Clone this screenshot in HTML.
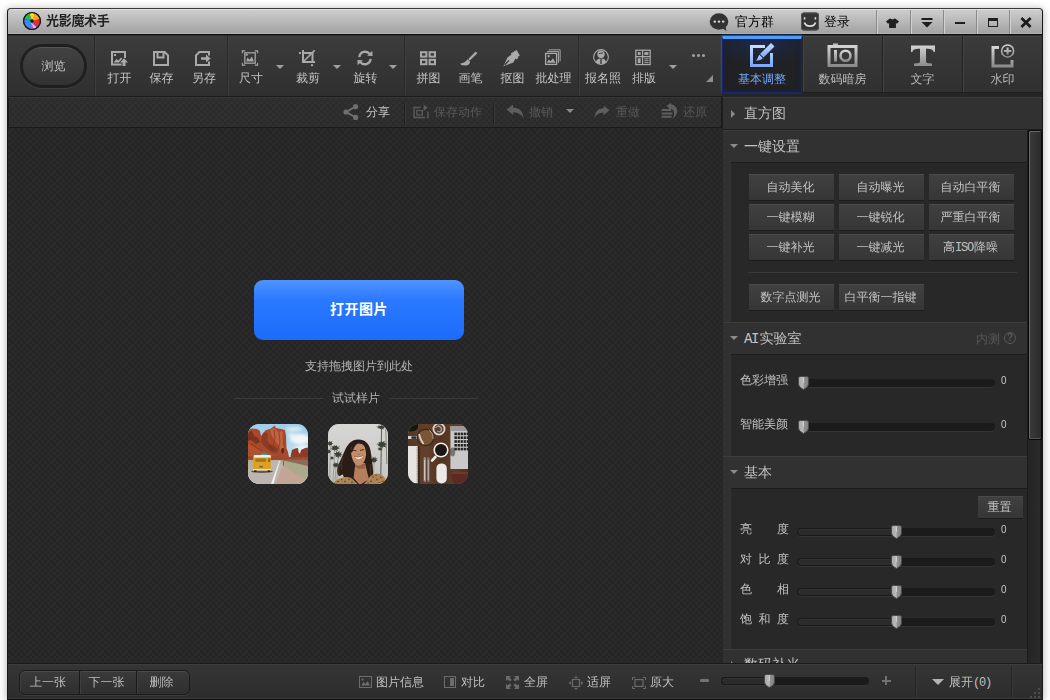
<!DOCTYPE html>
<html lang="zh-CN">
<head>
<meta charset="utf-8">
<title>光影魔术手</title>
<style>
*{box-sizing:border-box;margin:0;padding:0}
html,body{width:1050px;height:700px;overflow:hidden;background:#fff}
body{font-family:"Liberation Sans","WenQuanYi Zen Hei","Noto Sans CJK SC",sans-serif;font-size:12px;color:#c8c8c8;position:relative}
.abs{position:absolute}
#win{position:absolute;left:7px;top:8px;width:1036px;height:692px;background:#2b2b2b;border:1px solid #181818;border-top-color:#3a3a3a;border-bottom-color:#101010;border-radius:4px 4px 0 0;box-shadow:0 1px 8px rgba(0,0,0,.33);overflow:hidden}
/* all children of #win are positioned in page coords via wrapper */
#pg{position:absolute;left:-8px;top:-9px;width:1050px;height:700px}
#title{position:absolute;left:8px;top:9px;width:1034px;height:25px;background:linear-gradient(#cdcdcd,#a1a1a1);border-top:1px solid #e0e0e0;box-shadow:inset 0 -1px 0 #b2b2b2}
#titledark{position:absolute;left:8px;top:34px;width:1034px;height:2px;background:linear-gradient(#0c0c0c 50%,#2e2e2e 50%)}
#title .name{will-change:transform;position:absolute;left:38px;top:3px;font-size:13px;font-weight:bold;color:#222;line-height:16px;font-family:"Liberation Sans","Noto Sans CJK SC",sans-serif;letter-spacing:-.3px}
.tsep{position:absolute;top:0;width:1px;height:24px;background:#8a8a8a;box-shadow:1px 0 0 #d0d0d0}
.ttext{position:absolute;top:4px;font-size:13px;color:#000;line-height:16px}
#toolbar{position:absolute;left:8px;top:36px;width:714px;height:61px;background:linear-gradient(#3c3c3c,#2f2f2f);border-bottom:1px solid #1b1b1b}
.tb{position:absolute;top:0;height:61px;text-align:center;color:#c4c4c4;font-size:12px}
.tb svg{position:absolute;top:14px;left:50%;margin-left:-10px;width:18px;height:18px}
.tb span{position:absolute;left:0;right:0;top:35px;line-height:14px}
.vsep{position:absolute;top:0;width:1px;height:60px;background:#2a2a2a;box-shadow:1px 0 0 #3e3e3e}
.dd{position:absolute;top:29px;width:0;height:0;border:4px solid transparent;border-top:4px solid #a0a0a0;border-bottom:0}

.browse-o{position:absolute;left:12px;top:8px;width:67px;height:44px;border-radius:22px;background:#1f1f1f;box-shadow:0 1px 0 #3d3d3d}
.browse-i{position:absolute;left:3px;top:3px;width:61px;height:38px;border-radius:19px;background:linear-gradient(#424242,#323232);border-top:1px solid #555;text-align:center;line-height:36px;color:#c6c6c6;font-size:12px}

.chk{background-color:#2b2b2b;background-image:conic-gradient(#303030 25%,#2a2a2a 0 50%,#303030 0 75%,#2a2a2a 0);background-size:6px 6px}
#subbar{position:absolute;left:8px;top:97px;width:714px;height:31px;border-bottom:1px solid #1a1a1a;border-right:1px solid #1a1a1a;border-top:1px solid #383838;box-shadow:inset 1px 0 0 #1a1a1a;background-color:#2c2c2c;background-image:conic-gradient(#303030 25%,#2b2b2b 0 50%,#303030 0 75%,#2b2b2b 0);background-size:6px 6px}
.st{position:absolute;top:7px;line-height:14px;font-size:12px;color:#585858}
.ssep{position:absolute;top:5px;width:1px;height:21px;background:#1e1e1e;box-shadow:1px 0 0 #3a3a3a}
#canvas{position:absolute;left:8px;top:128px;width:715px;height:535px;background-color:#272727;background-image:conic-gradient(#2a2a2a 25%,#252525 0 50%,#2a2a2a 0 75%,#252525 0);background-size:6px 6px}
#openbtn{position:absolute;left:246px;top:152px;width:210px;height:60px;border-radius:9px;background:linear-gradient(#5193ff,#2a78ff 35%,#1b6cfb);color:#fff;font-weight:bold;font-size:14px;text-align:center;line-height:58px;font-family:"Liberation Sans","Noto Sans CJK SC",sans-serif;letter-spacing:.5px}
.ctext{position:absolute;left:0;width:702px;text-align:center;font-size:12px;line-height:14px;color:#b4b4b4}
.thumb{position:absolute;top:296px;width:60px;height:60px;border-radius:11px;overflow:hidden;background:#888}
.thumb svg{display:block}

#tabs{position:absolute;left:722px;top:36px;width:321px;height:61px;background:#252525}
.tab{position:absolute;top:0;width:80px;height:57px;border-left:1px solid #222;border-bottom:1px solid #1f1f1f;background:linear-gradient(#3b3b3b,#303030);box-shadow:inset 1px 1px 0 #434343;text-align:center}
.tab span{position:absolute;left:0;right:0;top:36px;line-height:14px;font-size:12px;color:#bcbcbc}
.tab.act{border:1px solid #17286a;border-top:3px solid #4d9dff;background:radial-gradient(ellipse 75% 55% at 50% 0,#1d2b55 0,#1f2434 55%,#212123 100%);box-shadow:inset 0 0 5px #17224e,0 -1px 3px rgba(60,140,255,.5)}
.tab.act svg{margin-top:-3px}
.tab.act span{top:33px}

#panel{position:absolute;left:723px;top:97px;width:319px;height:566px;background:#313131;overflow:hidden;box-shadow:-1px 0 0 #1e1e1e}
.phead{position:absolute;left:0;width:305px;height:33px;background:#313131;border-top:1px solid #3d3d3d}
.phead b{position:absolute;left:21px;top:7px;font-weight:normal;font-size:14px;line-height:16px;color:#c2c2c2}
.ar-r{position:absolute;left:8px;top:12px;width:0;height:0;border:4px solid transparent;border-left:4px solid #8a8a8a;border-right:0}
.ar-d{position:absolute;left:7px;top:13px;width:0;height:0;border:4px solid transparent;border-top:4px solid #8a8a8a;border-bottom:0}
.pbox{position:absolute;left:8px;width:297px;background:#282828;border-top:1px solid #1b1b1b;margin-top:-1px;box-sizing:content-box}
.pbtn{padding-right:2px;position:absolute;background:linear-gradient(#404040,#363636);border-top:1px solid #4a4a4a;box-shadow:0 1px 0 #1c1c1c;color:#c2c2c2;text-align:center;font-size:12px;white-space:nowrap}
.beta{position:absolute;left:253px;top:9px;font-size:12px;line-height:14px;color:#585858}
.q{position:absolute;left:281px;top:9px;width:12px;height:12px;border:1px solid #585858;border-radius:50%;font-size:10px;line-height:10px;text-align:center;color:#585858;font-family:"Liberation Sans",sans-serif;font-weight:bold}
.slab{position:absolute;left:17px;font-size:12px;line-height:14px;color:#c2c2c2;white-space:nowrap}
.strack{position:absolute;height:8px;border-radius:4px;background:#1b1b1b;box-shadow:0 1px 0 #343434;overflow:hidden}
.strack i{position:absolute;left:0;top:0;height:8px;background:#2b2b2b;border:1px solid #1a1a1a;border-right:0;border-radius:4px 0 0 4px;box-shadow:inset 0 1px 0 #333}
.mono{font-family:"Liberation Mono",monospace;letter-spacing:-1.2px;margin-right:1px}
.mono14{font-family:"Liberation Mono",monospace;letter-spacing:-1.4px;margin-right:1.4px}
.sval{position:absolute;left:277.5px;font-size:11px;line-height:14px;color:#c6c6c6;font-family:"Liberation Sans",sans-serif;transform:scaleX(.9);transform-origin:left}
#sbar{position:absolute;left:304px;top:33px;width:15px;height:533px;background:linear-gradient(90deg,#1c1c1c 0,#1c1c1c 1px,#242424 1px,#2b2b2b 13px,#1c1c1c 13px)}
#sthumb{position:absolute;left:1px;top:0;width:14px;height:310px;border-radius:2px;background:linear-gradient(90deg,#3b3b3b,#2b2b2b);border:1px solid #0a0a0a;box-shadow:inset 1px 1px 0 #666,inset 0 -1px 0 #555}

#bbar{position:absolute;left:8px;top:663px;width:1034px;height:36px;background:linear-gradient(#353535,#2d2d2d);border-top:1px solid #1a1a1a;box-shadow:inset 0 1px 0 #3d3d3d,inset 0 -1px 0 #3a3a3a}
#nav{position:absolute;left:11px;top:6px;height:25px;border-radius:6px;background:linear-gradient(#3a3a3a,#2f2f2f);border:1px solid #1c1c1c;box-shadow:inset 0 1px 0 #4a4a4a,0 1px 0 #3a3a3a;display:flex;overflow:hidden}
#nav div{padding-right:3px;height:23px;line-height:23px;text-align:center;color:#bdbdbd;font-size:12px;border-right:1px solid #1a1a1a;box-shadow:inset 1px 0 0 #3e3e3e}
.bt{position:absolute;top:11px;line-height:14px;font-size:12px;color:#c0c0c0;white-space:nowrap}
.bsep{position:absolute;top:2px;width:1px;height:32px;background:#222;box-shadow:1px 0 0 #3a3a3a}
</style>
</head>
<body>
<div id="win"><div id="pg">

<!-- TITLE BAR -->
<div id="title">
  <div class="name">光影魔术手</div>

  <svg class="abs" style="left:14px;top:1px" width="20" height="20" viewBox="0 0 20 20">
    <circle cx="10" cy="10" r="9" fill="#1a1a1a"/>
    <g transform="translate(10 10)">
      <path d="M0 0 L-7.6 -2.2 A8 8 0 0 1 -2.5 -7.5 Z" fill="#2fb457"/>
      <path d="M0 0 L-2.5 -7.5 A8 8 0 0 1 2.6 -7.5 L2.2 -1 Z" fill="#f4dc1e"/>
      <path d="M0 0 L2.6 -7.5 A8 8 0 0 1 7.6 -2 L1 1 Z" fill="#f6a51c"/>
      <path d="M0 0 L7.6 -2 A8 8 0 0 1 5.2 6 Z" fill="#e23030"/>
      <path d="M0 0 L5.2 6 A8 8 0 0 1 -2 7.7 L-1.6 1 Z" fill="#b15bd0"/>
      <path d="M0 0 L-2 7.7 A8 8 0 0 1 -7.6 -2.2 Z" fill="#2f8ff0"/>
      <path d="M-1.6 1 L4.6 6.4 A8 8 0 0 1 2 7.6 Z" fill="#e3c6ee"/>
      <circle cx="0" cy="0" r="1.7" fill="#151515"/>
    </g>
    <circle cx="10" cy="10" r="8.5" fill="none" stroke="#1a1a1a" stroke-width="1.2"/>
  </svg>
  <!-- chat icon -->
  <svg class="abs" style="left:701px;top:1.5px" width="20" height="20" viewBox="0 0 20 20">
    <ellipse cx="10" cy="9.5" rx="9.3" ry="8.3" fill="#333"/>
    <path d="M13 16 L17.5 19 L16.5 14 Z" fill="#333"/>
    <circle cx="5.8" cy="9.6" r="1.2" fill="#d8d8d8"/><circle cx="10" cy="9.6" r="1.2" fill="#d8d8d8"/><circle cx="14.2" cy="9.6" r="1.2" fill="#d8d8d8"/>
  </svg>
  <div class="ttext" style="left:727px">官方群</div>
  <!-- login icon -->
  <svg class="abs" style="left:793px;top:1.5px" width="18" height="19" viewBox="0 0 18 19">
    <rect x="0" y="0.5" width="18" height="18" rx="3" fill="#353535"/>
    <rect x="0.5" y="1" width="17" height="17" rx="2.5" fill="none" stroke="#555" stroke-width="1"/>
    <path d="M3.6 5.2v2.4M14.4 5.2v2.4" stroke="#e0e0e0" stroke-width="1.6" fill="none"/>
    <path d="M3.4 10.6 C5 15.4 13 15.4 14.6 10.6" stroke="#e0e0e0" stroke-width="1.7" fill="none"/>
  </svg>
  <div class="ttext" style="left:816px">登录</div>
  <div class="tsep" style="left:868px"></div>
  <div class="tsep" style="left:902px"></div>
  <div class="tsep" style="left:935px"></div>
  <div class="tsep" style="left:968px"></div>
  <div class="tsep" style="left:1001px"></div>
  <!-- shirt -->
  <svg class="abs" style="left:878px;top:8px" width="13" height="10" viewBox="0 0 13 10">
    <path d="M4.2 0.3 C5 1.6 8 1.6 8.8 0.3 L13 3.4 L11 5.8 L9.9 5 V10 H3.1 V5 L2 5.8 L0 3.4 Z" fill="#1e1e1e"/>
  </svg>
  <!-- menu -->
  <svg class="abs" style="left:913px;top:7px" width="12" height="12" viewBox="0 0 12 12">
    <rect x="0.5" y="1" width="11" height="2" fill="#1e1e1e"/>
    <path d="M0.5 5 H11.5 L6 10.5 Z" fill="#1e1e1e"/>
  </svg>
  <!-- min -->
  <div class="abs" style="left:947px;top:12px;width:10px;height:2px;background:#1e1e1e"></div>
  <!-- max -->
  <div class="abs" style="left:980px;top:8px;width:10px;height:9px;border:1px solid #1e1e1e;border-top-width:3px"></div>
  <!-- close -->
  <svg class="abs" style="left:1012px;top:7px" width="12" height="11" viewBox="0 0 12 11">
    <path d="M1.4 1 L10.6 10 M10.6 1 L1.4 10" stroke="#1a1a1a" stroke-width="2.7" fill="none"/>
  </svg>
</div>
<div id="titledark"></div>

<!-- MAIN TOOLBAR -->
<div id="toolbar">
<div class="browse-o"><div class="browse-i">浏览</div></div>
<div class="tb" style="left:87.5px;width:48px"><svg viewBox="0 0 18 18"><path d="M11.5 14.5 H2 V2 H15 V8" fill="none" stroke="#a9a9a9" stroke-width="2"/><rect x="4" y="4" width="2" height="2" fill="#a9a9a9"/><path d="M3.5 12.5 L6.5 9 L8.5 10.5 L11 7.5 L12.3 8.6 L9 12.5 Z" fill="#a9a9a9"/><path d="M14 8.2 L18 12.4 H15.5 V16 H12.5 V12.4 H10 Z" fill="#a9a9a9"/></svg><span>打开</span></div>
<div class="tb" style="left:129.5px;width:48px"><svg viewBox="0 0 18 18"><path d="M2 2 H12.6 L16 5.4 V15 H2 Z" fill="none" stroke="#a9a9a9" stroke-width="2"/><path d="M5.5 2.5 V7.5 H11.5 V2.5" fill="none" stroke="#a9a9a9" stroke-width="2"/></svg><span>保存</span></div>
<div class="tb" style="left:172px;width:48px"><svg viewBox="0 0 18 18"><path d="M15 5.5 V2 H5.4 L2 5.4 V15 H15 V11.5" fill="none" stroke="#a9a9a9" stroke-width="2"/><path d="M7 7.2 H12 V4.6 L16.6 8.5 L12 12.4 V9.8 H7 Z" fill="#a9a9a9"/></svg><span>另存</span></div>
<div class="tb" style="left:219px;width:48px"><svg viewBox="0 0 18 18" style="transform:translate(0px,-1px) scale(0.96)"><path d="M1 4 V1.5 H4 M14 1.5 H17 V4 M17 14 V16.5 H14 M4 16.5 H1 V14" fill="none" stroke="#a9a9a9" stroke-width="1.2"/><rect x="3.6" y="3.6" width="10.8" height="10.8" fill="none" stroke="#a9a9a9" stroke-width="1.3"/><rect x="4.6" y="4.6" width="2" height="2" fill="#a9a9a9"/><path d="M5 12.6 L6.3 8.6 L8.6 10.8 L11 7.4 L13 12.6 Z" fill="#a9a9a9"/></svg><span>尺寸</span></div>
<div class="tb" style="left:276px;width:48px"><svg viewBox="0 0 18 18"><rect x="5" y="3" width="9.5" height="9" fill="none" stroke="#a9a9a9" stroke-width="2"/><path d="M5 0 V3 M14.5 12 H17" stroke="#a9a9a9" stroke-width="2"/><path d="M5.5 11.5 L16.8 0.2" stroke="#a9a9a9" stroke-width="1.7"/><rect x="1" y="2" width="2" height="2" fill="#a9a9a9"/><rect x="13" y="14.2" width="2" height="2" fill="#a9a9a9"/></svg><span>裁剪</span></div>
<div class="tb" style="left:333.5px;width:48px"><svg viewBox="0 0 18 18" style="transform:translate(0px,-1px) scale(0.97)"><path d="M3.2 8 A6 6 0 0 1 14 5" fill="none" stroke="#a9a9a9" stroke-width="2.4"/><path d="M11.2 6.6 L16.8 7 L16.6 1.4 Z" fill="#a9a9a9"/><path d="M14.8 10 A6 6 0 0 1 4 13" fill="none" stroke="#a9a9a9" stroke-width="2.4"/><path d="M6.8 11.4 L1.2 11 L1.4 16.6 Z" fill="#a9a9a9"/></svg><span>旋转</span></div>
<div class="tb" style="left:396.5px;width:48px"><svg viewBox="0 0 18 18" style="transform:translate(0px,-0.8px)"><g fill="none" stroke="#a9a9a9" stroke-width="2"><rect x="2" y="3" width="5.4" height="4.4"/><rect x="10.6" y="3" width="5.4" height="4.4"/><rect x="2" y="10.6" width="5.4" height="4.4"/><rect x="10.6" y="10.6" width="5.4" height="4.4"/></g></svg><span>拼图</span></div>
<div class="tb" style="left:438.5px;width:48px"><svg viewBox="0 0 18 18" style="transform:translate(-1px,0px)"><path d="M15.7 1.6 L17.4 3.2 L9.8 10.6 L8.2 9 Z" fill="#a9a9a9"/><path d="M7.6 9.2 L10 11.6 C10.2 14 8.4 15.4 6.4 15.4 L2.4 15.2 C1.4 15 0.6 14.2 0.4 13.4 C3.6 13.2 5.6 11.6 7.6 9.2 Z" fill="#a9a9a9"/></svg><span>画笔</span></div>
<div class="tb" style="left:480.5px;width:48px"><svg viewBox="0 0 18 18" style="transform:translate(-1px,0px)"><path d="M1.4 16.2 L5.6 7.2 L9.4 4.8 L8.8 3.6 L14.6 0 L17.8 5.6 L15.8 7 L16.2 8 L14 9.4 L13.4 8.6 L11.4 12.6 Z" fill="#a9a9a9"/><path d="M2.6 15 L7 10.4" stroke="#353535" stroke-width="1.2"/></svg><span>抠图</span></div>
<div class="tb" style="left:521.5px;width:48px"><svg viewBox="0 0 18 18" style="transform:translate(0px,-2px) scale(0.95)"><path d="M4.5 1.5 H16.5 V13.5 M2.8 3.3 H14.8 V15.2" fill="none" stroke="#a9a9a9" stroke-width="1"/><rect x="1.2" y="5.2" width="11.6" height="11.6" fill="none" stroke="#a9a9a9" stroke-width="1.4"/><circle cx="4.4" cy="8.2" r="1.2" fill="#a9a9a9"/><path d="M2.6 15 L4.4 11.6 L6.4 13.6 L9 10.4 L11.6 15 Z" fill="#a9a9a9"/></svg><span>批处理</span></div>
<div class="tb" style="left:571px;width:48px"><svg viewBox="0 0 18 18" style="transform:translate(-1px,-2px) scale(0.92)"><circle cx="9" cy="9" r="8" fill="none" stroke="#a9a9a9" stroke-width="1.2"/><circle cx="9" cy="6" r="4" fill="#a9a9a9"/><path d="M3.4 15 C3.6 11.8 5.6 10.6 9 10.6 C12.4 10.6 14.4 11.8 14.6 15 C12 17.4 6 17.4 3.4 15 Z" fill="#a9a9a9"/><path d="M8.3 11 H9.7 V16.5 H8.3 Z" fill="#333"/><path d="M6.6 5.4 L11.4 4.4" stroke="#333" stroke-width="1"/></svg><span>报名照</span></div>
<div class="tb" style="left:612px;width:48px"><svg viewBox="0 0 18 18" style="transform:translate(0px,-1.6px) scale(0.97)"><rect x="1.6" y="1.6" width="14.8" height="14.8" fill="none" stroke="#a9a9a9" stroke-width="1.3"/><path d="M8.6 1.6 V16.4 M1.6 8.2 H16.4" stroke="#a9a9a9" stroke-width="1.2"/><rect x="3.6" y="3.6" width="3" height="2.8" fill="#a9a9a9"/><rect x="10.4" y="3.6" width="4.2" height="2.8" fill="#a9a9a9"/><rect x="3.6" y="10" width="3" height="4.8" fill="#a9a9a9"/><path d="M10.4 10.4 H14.8 M10.4 12.4 H14.8 M10.4 14.4 H14.8" stroke="#a9a9a9" stroke-width="1"/></svg><span>排版</span></div>
<div class="vsep" style="left:86px"></div>
<div class="vsep" style="left:219px"></div>
<div class="vsep" style="left:395.5px"></div>
<div class="vsep" style="left:570px"></div>
<div class="dd" style="left:267.5px"></div>
<div class="dd" style="left:324.5px"></div>
<div class="dd" style="left:381px"></div>
<div class="dd" style="left:660.5px"></div>
<div class="abs" style="left:684px;top:18px;width:3px;height:3px;border-radius:50%;background:#a0a0a0"></div>
<div class="abs" style="left:689px;top:18px;width:3px;height:3px;border-radius:50%;background:#a0a0a0"></div>
<div class="abs" style="left:694px;top:18px;width:3px;height:3px;border-radius:50%;background:#a0a0a0"></div>
<div class="abs" style="left:698px;top:39px;width:0;height:0;border-left:7px solid transparent;border-bottom:7px solid #8e8e8e"></div>
</div>



<!-- TABS -->
<div id="tabs">
  <div class="tab act" style="left:0">
    <svg class="abs" style="left:25px;top:6px" width="28" height="26" viewBox="0 0 28 26">
      <defs><linearGradient id="gb" x1="0" y1="0" x2="0" y2="1"><stop offset="0" stop-color="#c4dcff"/><stop offset="1" stop-color="#7fa8f8"/></linearGradient></defs>
      <path d="M17 4.5 H3.5 V23.5 H23.5 V11" fill="none" stroke="url(#gb)" stroke-width="3"/>
      <path d="M23 1 L26.5 4.5 L15.5 15.5 L12 12 Z" fill="url(#gb)"/>
      <path d="M11.4 12.8 L14.8 16.2 C13 18 10 18.6 7.6 18.8 C9.6 17.4 10 14.8 11.4 12.8 Z" fill="url(#gb)"/>
    </svg>
    <span style="color:#6fa6ff">基本调整</span>
  </div>
  <div class="tab" style="left:80px">
    <svg class="abs" style="left:24px;top:6px" width="31" height="26" viewBox="0 0 31 26">
      <defs><linearGradient id="gg" x1="0" y1="0" x2="0" y2="1"><stop offset="0" stop-color="#d2d2d2"/><stop offset="1" stop-color="#8c8c8c"/></linearGradient></defs>
      <path d="M6 1.5 H11 V4 H6 Z" fill="url(#gg)"/>
      <rect x="2" y="4.5" width="27" height="19" fill="none" stroke="url(#gg)" stroke-width="3"/>
      <rect x="7" y="8" width="3" height="11.5" fill="url(#gg)"/>
      <circle cx="18.5" cy="13.8" r="5" fill="none" stroke="url(#gg)" stroke-width="2.6"/>
    </svg>
    <span>数码暗房</span>
  </div>
  <div class="tab" style="left:160px">
    <svg class="abs" style="left:26.5px;top:8.5px" width="26" height="22" viewBox="0 0 26 22">
      <path d="M1 0.6 H25 V7 H23.6 C23 4.6 21.6 3.8 16 3.8 V16.6 C16 18 17.6 18.4 22 18.6 V21 H4 V18.6 C8.4 18.4 10 18 10 16.6 V3.8 C4.4 3.8 3 4.6 2.4 7 H1 Z" fill="url(#gg)"/>
    </svg>
    <span>文字</span>
  </div>
  <div class="tab" style="left:240px;width:80px">
    <svg class="abs" style="left:27px;top:6.5px" width="26" height="26" viewBox="0 0 26 26">
      <path d="M9 4.5 H3 V23 H22 V17" fill="none" stroke="url(#gg)" stroke-width="3"/>
      <circle cx="17.6" cy="8" r="6" fill="none" stroke="url(#gg)" stroke-width="1.6"/>
      <path d="M17.6 4.4 V11.6 M14 8 H21.2" stroke="url(#gg)" stroke-width="2"/>
    </svg>
    <span>水印</span>
  </div>
</div>


<!-- RIGHT PANEL -->
<div id="panel">
  <svg width="0" height="0" style="position:absolute"><defs><linearGradient id="gth" x1="0" y1="0" x2="1" y2="0"><stop offset="0" stop-color="#a6a6a6"/><stop offset=".48" stop-color="#bcbcbc"/><stop offset=".52" stop-color="#949494"/><stop offset="1" stop-color="#808080"/></linearGradient></defs></svg>
  <div class="phead" style="top:0;height:33px;width:319px;border-bottom:1px solid #1d1d1d"><i class="ar-r"></i><b>直方图</b></div>
  <div class="phead" style="top:33px"><i class="ar-d"></i><b>一键设置</b></div>
  <div class="pbox" style="top:66px;height:159px"></div>
<div class="pbtn" style="left:26px;top:77px;width:85px;height:26px;line-height:25px">自动美化</div>
<div class="pbtn" style="left:116px;top:77px;width:85px;height:26px;line-height:25px">自动曝光</div>
<div class="pbtn" style="left:206px;top:77px;width:85px;height:26px;line-height:25px">自动白平衡</div>
<div class="pbtn" style="left:26px;top:107px;width:85px;height:26px;line-height:25px">一键模糊</div>
<div class="pbtn" style="left:116px;top:107px;width:85px;height:26px;line-height:25px">一键锐化</div>
<div class="pbtn" style="left:206px;top:107px;width:85px;height:26px;line-height:25px">严重白平衡</div>
<div class="pbtn" style="left:26px;top:137px;width:85px;height:26px;line-height:25px">一键补光</div>
<div class="pbtn" style="left:116px;top:137px;width:85px;height:26px;line-height:25px">一键减光</div>
<div class="pbtn" style="left:206px;top:137px;width:85px;height:26px;line-height:25px">高<span class="mono">ISO</span>降噪</div>
<div class="abs" style="left:25px;top:175px;width:269px;height:1px;background:#3a3a3a"></div>
<div class="pbtn" style="left:26px;top:187px;width:85px;height:26px;line-height:25px">数字点测光</div>
<div class="pbtn" style="left:116px;top:187px;width:85px;height:26px;line-height:25px">白平衡一指键</div>

  <div class="phead" style="top:225px"><i class="ar-d"></i><b><span class="mono14">AI</span>实验室</b><span class="beta">内测</span><span class="q">?</span></div>
  <div class="pbox" style="top:258px;height:101px"></div>
<div class="slab" style="top:276.2px;">色彩增强</div>
<div class="strack" style="left:76px;top:282.2px;width:196px"></div>
<svg class="abs" style="left:74.5px;top:278.7px" width="11" height="14" viewBox="0 0 11 14"><path d="M2.2 0.5 H8.8 Q10.5 0.5 10.5 2.2 V8.2 Q10.5 11.2 5.5 13.5 Q0.5 11.2 0.5 8.2 V2.2 Q0.5 0.5 2.2 0.5 Z" fill="url(#gth)" stroke="#4a4a4a" stroke-width="1"/><path d="M5.5 1.2 V7" stroke="#fff" stroke-opacity=".45" stroke-width="1"/></svg>
<div class="sval" style="top:275.7px">0</div>
<div class="slab" style="top:320.2px;">智能美颜</div>
<div class="strack" style="left:76px;top:326.2px;width:196px"></div>
<svg class="abs" style="left:74.5px;top:322.7px" width="11" height="14" viewBox="0 0 11 14"><path d="M2.2 0.5 H8.8 Q10.5 0.5 10.5 2.2 V8.2 Q10.5 11.2 5.5 13.5 Q0.5 11.2 0.5 8.2 V2.2 Q0.5 0.5 2.2 0.5 Z" fill="url(#gth)" stroke="#4a4a4a" stroke-width="1"/><path d="M5.5 1.2 V7" stroke="#fff" stroke-opacity=".45" stroke-width="1"/></svg>
<div class="sval" style="top:319.7px">0</div>

  <div class="phead" style="top:359px"><i class="ar-d"></i><b>基本</b></div>
  <div class="pbox" style="top:392px;height:160px"></div>
<div class="pbtn" style="left:255px;top:399px;width:45px;height:22px;line-height:21px">重置</div>
<div class="slab" style="top:425.3px;width:49px;text-align:justify;text-align-last:justify">亮度</div>
<div class="strack" style="left:74px;top:431.3px;width:198px"><i style="width:99px"></i></div>
<svg class="abs" style="left:167.5px;top:427.8px" width="11" height="14" viewBox="0 0 11 14"><path d="M2.2 0.5 H8.8 Q10.5 0.5 10.5 2.2 V8.2 Q10.5 11.2 5.5 13.5 Q0.5 11.2 0.5 8.2 V2.2 Q0.5 0.5 2.2 0.5 Z" fill="url(#gth)" stroke="#4a4a4a" stroke-width="1"/><path d="M5.5 1.2 V7" stroke="#fff" stroke-opacity=".45" stroke-width="1"/></svg>
<div class="sval" style="top:424.8px">0</div>
<div class="slab" style="top:455.3px;width:49px;text-align:justify;text-align-last:justify">对比度</div>
<div class="strack" style="left:74px;top:461.3px;width:198px"><i style="width:99px"></i></div>
<svg class="abs" style="left:167.5px;top:457.8px" width="11" height="14" viewBox="0 0 11 14"><path d="M2.2 0.5 H8.8 Q10.5 0.5 10.5 2.2 V8.2 Q10.5 11.2 5.5 13.5 Q0.5 11.2 0.5 8.2 V2.2 Q0.5 0.5 2.2 0.5 Z" fill="url(#gth)" stroke="#4a4a4a" stroke-width="1"/><path d="M5.5 1.2 V7" stroke="#fff" stroke-opacity=".45" stroke-width="1"/></svg>
<div class="sval" style="top:454.8px">0</div>
<div class="slab" style="top:485.3px;width:49px;text-align:justify;text-align-last:justify">色相</div>
<div class="strack" style="left:74px;top:491.3px;width:198px"><i style="width:99px"></i></div>
<svg class="abs" style="left:167.5px;top:487.8px" width="11" height="14" viewBox="0 0 11 14"><path d="M2.2 0.5 H8.8 Q10.5 0.5 10.5 2.2 V8.2 Q10.5 11.2 5.5 13.5 Q0.5 11.2 0.5 8.2 V2.2 Q0.5 0.5 2.2 0.5 Z" fill="url(#gth)" stroke="#4a4a4a" stroke-width="1"/><path d="M5.5 1.2 V7" stroke="#fff" stroke-opacity=".45" stroke-width="1"/></svg>
<div class="sval" style="top:484.8px">0</div>
<div class="slab" style="top:515.3px;width:49px;text-align:justify;text-align-last:justify">饱和度</div>
<div class="strack" style="left:74px;top:521.3px;width:198px"><i style="width:99px"></i></div>
<svg class="abs" style="left:167.5px;top:517.8px" width="11" height="14" viewBox="0 0 11 14"><path d="M2.2 0.5 H8.8 Q10.5 0.5 10.5 2.2 V8.2 Q10.5 11.2 5.5 13.5 Q0.5 11.2 0.5 8.2 V2.2 Q0.5 0.5 2.2 0.5 Z" fill="url(#gth)" stroke="#4a4a4a" stroke-width="1"/><path d="M5.5 1.2 V7" stroke="#fff" stroke-opacity=".45" stroke-width="1"/></svg>
<div class="sval" style="top:514.8px">0</div>

  <div class="phead" style="top:552px;height:20px"><i class="ar-r" style="top:11px"></i><b style="top:6px">数码补光</b></div>
  <div id="sbar"><div id="sthumb"></div></div>
</div>

<!-- SUB TOOLBAR -->
<div id="subbar">
  <svg class="abs" style="left:334px;top:5px" width="18" height="18" viewBox="0 0 18 18">
    <path d="M13.6 3.6 L4 9 L13.6 14.4" fill="none" stroke="#6e6e6e" stroke-width="2"/>
    <circle cx="13.6" cy="3.6" r="2.6" fill="#6e6e6e"/><circle cx="4" cy="9" r="2.6" fill="#6e6e6e"/><circle cx="13.6" cy="14.4" r="2.6" fill="#6e6e6e"/>
  </svg>
  <div class="st" style="left:358px;color:#c4c4c4">分享</div>
  <div class="ssep" style="left:396px"></div>
  <svg class="abs" style="left:405px;top:6px" width="17" height="15" viewBox="0 0 17 15">
    <path d="M7.5 3.5 H1 V13.5 H12 M15 7.5 V13.5 H14" fill="none" stroke="#5c5c5c" stroke-width="1.3"/>
    <rect x="3.8" y="6.5" width="5.6" height="4.4" fill="none" stroke="#5c5c5c" stroke-width="1.2"/>
    <path d="M10.6 0.6 L14.6 3.8 L10.6 7 Z" fill="#5c5c5c"/>
  </svg>
  <div class="st" style="left:426px">保存动作</div>
  <div class="ssep" style="left:485px"></div>
  <svg class="abs" style="left:498px;top:6px" width="19" height="15" viewBox="0 0 19 15">
    <path d="M0.6 5.6 L7 0.6 V3.6 C13 3.6 16.6 7 17.6 14 C15.4 10.2 12.4 8.4 7 8.4 V11 Z" fill="#5e5e5e"/>
  </svg>
  <div class="st" style="left:521px">撤销</div>
  <div class="abs" style="left:558px;top:11px;width:0;height:0;border:4px solid transparent;border-top:4px solid #8a8a8a;border-bottom:0"></div>
  <svg class="abs" style="left:585px;top:6.5px" width="17" height="14" viewBox="0 0 19 15" preserveAspectRatio="none">
    <path d="M18.4 5.6 L12 0.6 V3.6 C6 3.6 2.4 7 1.4 14 C3.6 10.2 6.6 8.4 12 8.4 V11 Z" fill="#5e5e5e"/>
  </svg>
  <div class="st" style="left:608px">重做</div>
  <svg class="abs" style="left:653px;top:4px" width="17" height="18" viewBox="0 0 17 18">
    <path d="M5.6 4 L10.2 0.4 V2.6 C14.4 3 16.4 6.6 16.2 9.6 C16 13 13.8 15.4 12 16.4 C13.8 13 13.6 7.8 10.2 6.6 V8.4 Z" fill="#5e5e5e"/>
    <path d="M0.6 8 H10 M0.6 11.4 H11.4 M0.6 14.8 H10.6" stroke="#5e5e5e" stroke-width="2"/>
  </svg>
  <div class="st" style="left:675px">还原</div>
</div>

<!-- CANVAS -->
<div id="canvas">
  <div id="openbtn">打开图片</div>
  <div class="ctext" style="top:231px">支持拖拽图片到此处</div>
  <div class="abs" style="left:226px;top:270px;width:89px;height:1px;background:#3c3c3c"></div>
  <div class="abs" style="left:381px;top:270px;width:89px;height:1px;background:#3c3c3c"></div>
  <div class="ctext" style="top:263px;left:-3px">试试样片</div>
  <div class="thumb" style="left:240px"><svg width="60" height="60" viewBox="0 0 60 60">
<defs><linearGradient id="sky" x1="0" y1="0" x2="0" y2="1"><stop offset="0" stop-color="#9fcdea"/><stop offset="1" stop-color="#dcebf2"/></linearGradient>
<filter id="bl1" x="-5%" y="-5%" width="110%" height="110%"><feGaussianBlur stdDeviation=".55"/></filter>
<filter id="bl2"><feGaussianBlur stdDeviation="1.6"/></filter></defs>
<rect width="60" height="60" fill="url(#sky)"/>
<g filter="url(#bl2)"><ellipse cx="52" cy="15" rx="10" ry="5" fill="#f2f6f8"/><ellipse cx="46" cy="5" rx="8" ry="2" fill="#dfedf4"/><ellipse cx="54" cy="25" rx="8" ry="4" fill="#e8f0f3"/><ellipse cx="44" cy="11" rx="4" ry="2" fill="#e4eff5"/></g>
<g filter="url(#bl1)">
<path d="M0 6 L4 4.5 L9 5 L12 7 L13 12 L15 9 L18 6 L22 5 L25 3 L26.5 1.5 L28 4 L33 5 L37 6 L38 12 L38.5 24 L40 28 L41 33 L46 33 L60 33 L60 38 L0 38 Z" fill="#a8492d"/>
<path d="M43 30 L44 26 L47 24.5 L50 24 L50.5 28 L52 30 L53 26 L57 24 L60 23.5 L60 36 L42 36 Z" fill="#8c3a26"/>
<path d="M0 8 L4 7 L6 12 L10 14 L12 18 L8 20 L3 16 L0 17 Z" fill="#7e321f"/>
<path d="M14 12 L17 8 L20 10 L19 16 L22 20 L27 22 L30 26 L29 30 L24 29 L18 24 L13 18 Z" fill="#8b3a23"/>
<path d="M22 6 L26 4 L30 8 L34 7 L36 10 L36 22 L33 28 L31 22 L28 18 L24 12 Z" fill="#c0633f"/>
<path d="M0 20 L8 22 L16 26 L22 30 L30 32 L0 32 Z" fill="#b4512f"/><path d="M26 6 L27 14 L25 22 M31 8 L32 18 L30 26 M35 9 L35.6 22" stroke="#8a3a22" stroke-width="1" fill="none" opacity=".8"/><path d="M3 20 L9 24 L15 27 M20 21 L26 26" stroke="#7a301c" stroke-width="1.2" fill="none" opacity=".7"/><path d="M33 26 L34 24 L35.6 24 L36 28 L34 30 Z" fill="#5e2416"/>
<rect x="0" y="28.5" width="32" height="1.2" fill="#8a5a46" opacity=".8"/>
<rect x="0" y="33" width="60" height="5" fill="#9a4a32"/>
<path d="M36 35.5 H60 V44 L40 38 Z" fill="#8c6a55"/>
<path d="M0 36 H33 L60 44 V60 H0 Z" fill="#c2a594"/>
<path d="M33 36.5 L36 36.5 L60 42 V57 L48 50 L38 43 Z" fill="#aaa98c"/>
<path d="M26 36 L32.5 36 L34 44 L27 60 L0 60 L0 44 Z" fill="#bcb6b0"/>
<path d="M0 38 L6 36.5 L6 44 L0 46 Z" fill="#b5b295"/>
<path d="M31.2 37 L32 37 L25.4 60 L23 60 Z" fill="#f4f2ee"/>
<ellipse cx="14" cy="47.4" rx="11" ry="1.6" fill="#4a4038" opacity=".8"/>
<rect x="5.2" y="32.6" width="17.6" height="13.6" rx="1.6" fill="#e0a01c"/>
<path d="M6.4 31 H22 Q23 31 23 32.6 V33.6 H5.6 V32.6 Q5.6 31 6.4 31 Z" fill="#f2eee6"/>
<rect x="13" y="29.6" width="6" height="1.4" fill="#3aa0b4"/>
<rect x="7.4" y="34.4" width="10.6" height="3.4" rx=".6" fill="#9a7424"/>
<rect x="20" y="34.4" width="2.2" height="3.6" fill="#8a6a2a"/>
<rect x="5" y="45" width="18" height="1.6" fill="#e8e2d6"/>
<rect x="11.4" y="42" width="3.4" height="1.4" fill="#4a5a7a"/>
<rect x="6" y="46.4" width="2.6" height="1.6" fill="#2a2420"/><rect x="19.6" y="46.4" width="2.6" height="1.6" fill="#2a2420"/>
<rect x="35.2" y="37" width=".7" height="4.6" fill="#6a4a3a"/>
</g></svg></div>
  <div class="thumb" style="left:320px"><svg width="60" height="60" viewBox="0 0 60 60">
<defs><linearGradient id="wall" x1="0" y1="0" x2="0" y2="1"><stop offset="0" stop-color="#d6d6d4"/><stop offset="1" stop-color="#c4c4c2"/></linearGradient>
<filter id="bl3" x="-5%" y="-5%" width="110%" height="110%"><feGaussianBlur stdDeviation=".6"/></filter></defs>
<rect width="60" height="60" fill="url(#wall)"/>
<g filter="url(#bl3)">
<g stroke="#94968f" stroke-width=".8" fill="none"><path d="M2.4 20 L1.8 60"/><path d="M7 24 L4.8 60"/><path d="M10 30 L8.8 60"/><path d="M8 41 L7 60"/><path d="M46.2 37 L45.6 49"/></g>
<g stroke="#62645a" stroke-width="1.1" fill="none"><path d="M53.6 3 L52.8 52"/><path d="M57.8 5 L58.8 40" stroke-width=".7"/></g>
<g fill="#3a4234"><polygon points="5.1,19.5 3.7,20.2 3.9,21.4 2.4,21.0 1.3,22.1 0.8,20.7 -0.7,20.6 0.1,19.5 -0.7,18.4 0.8,18.3 1.3,16.9 2.4,18.0 4.4,17.0 3.7,18.8"/><polygon points="12.2,25.1 9.2,25.1 9.9,27.1 7.6,25.8 6.4,27.1 5.7,25.7 3.3,26.3 4.5,24.7 2.3,24.2 4.4,23.4 3.4,22.1 5.5,22.4 6.0,21.1 7.3,22.1 9.1,21.2 9.0,22.7 12.2,22.5 9.7,23.9"/><polygon points="15.0,30.9 12.3,31.4 13.5,33.3 11.0,32.3 10.4,34.4 9.3,32.4 7.6,33.2 7.9,31.6 5.8,31.3 7.5,30.3 5.7,28.9 8.2,29.1 8.0,27.0 9.8,28.5 11.4,26.7 11.5,28.9 14.2,28.2 12.5,30.0"/><polygon points="2.9,27.5 2.0,28.2 2.1,29.6 1.0,28.8 -0.2,29.7 -0.0,28.2 -1.2,27.5 -0.0,26.8 0.0,25.6 1.0,26.2 2.1,25.4 2.0,26.8"/><polygon points="11.1,42.0 9.5,42.2 9.6,44.1 8.0,42.6 6.4,44.1 6.5,42.2 4.4,42.1 5.9,41.0 4.7,39.9 6.5,39.8 6.4,37.9 8.0,39.4 9.5,38.2 9.5,39.8 11.9,39.7 10.1,41.0"/><polygon points="6.7,34.0 5.1,34.5 5.2,35.7 4.0,35.1 2.8,35.7 2.9,34.5 1.5,34.0 2.9,33.5 2.8,32.3 4.0,32.9 5.1,32.4 5.1,33.5"/><polygon points="57.6,3.6 55.3,3.9 56.0,5.4 53.5,4.5 52.1,5.2 51.5,4.3 49.4,4.3 50.3,3.5 47.9,2.7 50.7,2.5 50.4,1.3 52.5,1.9 54.0,0.8 54.5,2.1 57.1,1.9 55.7,2.9"/><polygon points="59.3,21.1 56.8,21.5 58.6,23.7 55.4,22.5 54.8,24.1 53.5,22.7 51.6,24.0 51.8,22.1 49.5,22.2 51.0,20.9 48.2,19.9 51.2,19.5 50.3,17.9 52.6,18.5 53.1,16.7 54.5,18.3 56.7,16.7 56.2,18.9 58.7,18.8 57.0,20.1"/><polygon points="55.1,25.0 53.4,25.5 53.7,26.7 52.0,26.0 50.7,26.4 50.6,25.5 49.4,25.0 50.6,24.5 50.6,23.6 52.0,24.0 53.6,23.3 53.4,24.5"/><polygon points="49.9,36.7 47.8,37.0 48.2,38.4 46.7,37.8 45.9,39.2 45.2,37.7 43.7,38.3 44.2,36.9 42.3,36.5 44.0,35.6 43.2,34.5 44.7,34.5 44.7,32.6 46.1,34.1 47.6,32.5 47.4,34.6 49.8,34.2 48.1,35.7"/></g>
<path d="M30 15.6 C24 15.6 19.6 20 16.6 27 C14.6 32 11 38 9.6 44 C8.6 48 9.6 51.6 11.6 52 C13 52 13.6 50 14.6 50.6 C15.6 51.6 16 55 18.6 58 L21 60 L44 60 C45 56 45.6 50 45 46 C44.6 40 43.6 33 42.6 27 C41.6 20 37 15.4 30 15.6 Z" fill="#2a1f18"/>
<path d="M12 40 C10 44 10 48 11 51 M15 33 C13 38 13 42 13.4 46 M42 40 C43 46 43 52 42 57" stroke="#43321f" stroke-width="1.1" fill="none"/>
<path d="M27.4 39 L37 39 L39.6 50 L41 55 L33.4 60 L31 60 L25.6 54 Z" fill="#b57e5c"/>
<path d="M27.4 40 L37 40 L37.6 44 C34 45.6 30 45 27 43 Z" fill="#9a6444"/>
<path d="M23 28 C22.6 22 26 19.4 30.4 19.4 C35 19.4 38.4 22.6 38.2 29 C38 35.6 35 41.6 30.8 41.6 C26.6 41.6 23.4 35 23 28 Z" fill="#c38d69"/>
<path d="M23 29 C22.6 22 25.6 18 31 19 C28 20 25.6 23 25 27 Z" fill="#2a1f18"/>
<path d="M36 20 C39 22 39.6 27 38.4 33 C38 28 37.6 24 36 20 Z" fill="#2a1f18"/>
<path d="M24.6 26.2 L28.4 26.8 M32 26.4 L36 25.6" stroke="#4a2e20" stroke-width="1"/>
<path d="M29.4 29.6 C29.8 30.6 31 30.8 31.8 30" stroke="#9a6444" stroke-width=".7" fill="none"/>
<path d="M26.6 32.6 C28.6 33.6 32.6 33.4 35 31.6 C34.2 35.4 28.4 36.4 26.6 32.6 Z" fill="#f4f0ec"/>
<path d="M26.2 32.2 C28.6 33.4 32.6 33.2 35.4 31.2" stroke="#8e4e3c" stroke-width=".6" fill="none"/>
<path d="M5.6 60 C6.4 56.6 10 54.6 15 53.4 C18 52.8 21 53 24 54.4 L29.6 60 Z" fill="#ae8352"/>
<path d="M36 60 L40.6 54.4 C42 51.6 45 49.8 49 49.6 C54 49.6 57.6 53 58.8 60 Z" fill="#ae8352"/>
<g fill="#5c4226"><circle cx="10" cy="57.6" r=".8"/><circle cx="13.6" cy="55.6" r=".7"/><circle cx="17" cy="57.6" r=".8"/><circle cx="21" cy="55.4" r=".7"/><circle cx="24" cy="58.4" r=".8"/><circle cx="8" cy="59.4" r=".7"/><circle cx="45" cy="53" r=".8"/><circle cx="49" cy="55.6" r=".8"/><circle cx="53" cy="53.6" r=".8"/><circle cx="55" cy="57.6" r=".8"/><circle cx="43" cy="57.4" r=".8"/><circle cx="48" cy="51.4" r=".7"/><circle cx="51" cy="58.6" r=".7"/><circle cx="40" cy="59" r=".7"/></g>
</g></svg></div>
  <div class="thumb" style="left:400px"><svg width="60" height="60" viewBox="0 0 60 60">
<defs><linearGradient id="wood" x1="0" y1="0" x2="1" y2="0"><stop offset="0" stop-color="#553623"/><stop offset=".3" stop-color="#634029"/><stop offset=".55" stop-color="#523320"/><stop offset=".8" stop-color="#5f3d28"/><stop offset="1" stop-color="#4c3021"/></linearGradient>
<filter id="bl4" x="-5%" y="-5%" width="110%" height="110%"><feGaussianBlur stdDeviation=".6"/></filter></defs>
<rect width="60" height="60" fill="url(#wood)"/>
<g filter="url(#bl4)">
<path d="M0 0 H10 V4 C8 7 4 7.6 0 7.6 Z" fill="#151210"/>
<rect x="0" y="12" width="9" height="3" fill="#d8d4cc"/><rect x="3.4" y="12.4" width="5" height="2.4" fill="#2a2420"/>
<rect x="0" y="22" width="9.6" height="37" fill="#e6e4e0"/><path d="M8.6 23 V58" stroke="#a8a6a2" stroke-width=".8" stroke-dasharray=".8 .8"/>
<rect x="10" y="22" width="1.6" height="38" fill="#3e2616"/>
<circle cx="17.6" cy="13.4" r="8.2" fill="#7a5436" stroke="#3a2a20" stroke-width="1.4"/>
<path d="M11 10 C12 14 13 17 15.6 20" stroke="#e6e2dc" stroke-width="1.8" fill="none" opacity=".85"/>
<path d="M21 6.4 C24 8 25.4 11 25 15" stroke="#d2cbc2" stroke-width="1" fill="none" opacity=".7"/>
<circle cx="31" cy="5" r="5.6" fill="#5a4030" stroke="#d8d6d2" stroke-width="1.8"/>
<path d="M27.6 4 C29 1 33 1.6 33.6 4.4 C34 7 31 8.6 29 7 M30 2 C33 3 34.6 6 32 8.4" stroke="#c8c6c2" stroke-width=".8" fill="none"/>
<path d="M27.4 33 L24 36.6" stroke="#eceae6" stroke-width="2.6" stroke-linecap="round"/>
<circle cx="33" cy="26" r="7.6" fill="#f0eeea"/>
<circle cx="33" cy="26" r="6" fill="#1c1614"/>
<rect x="15.6" y="33" width="2.4" height="25" rx="1.2" fill="#8e8e90"/><rect x="16.2" y="36" width=".8" height="20" fill="#d4d4d6"/>
<rect x="19.2" y="33" width="2.4" height="25" rx="1.2" fill="#77777a"/><rect x="19.8" y="36" width=".8" height="20" fill="#c4c4c8"/>
<rect x="28.4" y="39.4" width="10.4" height="20" rx="5" fill="#eceae8"/>
<rect x="42.4" y="2" width="18" height="43" fill="#c9c9c9"/>
<rect x="42.4" y="2" width="18" height="5" fill="#9a9a9c"/>
<ellipse cx="44.6" cy="28" rx="2.6" ry="4.4" fill="#2a2422" opacity=".5"/>
<g fill="#222"><rect x="46.4" y="8.6" width="13.6" height="2.6"/><rect x="46.4" y="12.4" width="13.6" height="2.6"/><rect x="46.4" y="16.2" width="13.6" height="2.6"/><rect x="46.4" y="20" width="13.6" height="2.6"/><rect x="46.4" y="23.8" width="13.6" height="2.6"/></g>
<g stroke="#c9c9c9" stroke-width=".7"><path d="M49.4 8 V27 M52.4 8 V27 M55.4 8 V27 M58.4 8 V27"/></g>
<path d="M43 48 H60 V60 H46 C44 57 43 52 43 48 Z" fill="#5c2c20"/>
<path d="M43.6 49 H60" stroke="#8a5a40" stroke-width=".8"/>
</g></svg></div>
</div>

<!-- BOTTOM BAR -->
<div id="bbar">
  <div id="nav"><div style="width:60px">上一张</div><div style="width:57px">下一张</div><div style="width:52px;border-right:0">删除</div></div>
  <svg class="abs" style="left:351px;top:12px" width="13" height="12" viewBox="0 0 13 12"><rect x=".5" y=".5" width="12" height="11" fill="none" stroke="#6c6c6c"/><circle cx="3.6" cy="3.6" r="1.1" fill="#6c6c6c"/><path d="M2 9.6 L4.6 6 L6.4 8 L8.6 5 L11 9.6 Z" fill="#6c6c6c"/></svg>
  <div class="bt" style="left:368px">图片信息</div>
  <svg class="abs" style="left:436px;top:12px" width="12" height="12" viewBox="0 0 12 12"><rect x=".5" y=".5" width="11" height="11" fill="none" stroke="#6c6c6c"/><rect x="6" y="2" width="4" height="8" fill="#6c6c6c"/></svg>
  <div class="bt" style="left:453px">对比</div>
  <svg class="abs" style="left:498px;top:12px" width="13" height="13" viewBox="0 0 13 13"><g fill="#6c6c6c"><path d="M0 0 H5 L3.4 1.6 L5.6 3.8 L3.8 5.6 L1.6 3.4 L0 5 Z"/><path d="M13 0 V5 L11.4 3.4 L9.2 5.6 L7.4 3.8 L9.6 1.6 L8 0 Z"/><path d="M0 13 V8 L1.6 9.6 L3.8 7.4 L5.6 9.2 L3.4 11.4 L5 13 Z"/><path d="M13 13 H8 L9.6 11.4 L7.4 9.2 L9.2 7.4 L11.4 9.6 L13 8 Z"/></g></svg>
  <div class="bt" style="left:516px">全屏</div>
  <svg class="abs" style="left:561px;top:12px" width="14" height="14" viewBox="0 0 14 14"><rect x="3.5" y="3.5" width="7" height="7" fill="none" stroke="#6c6c6c" stroke-width="1.2"/><g fill="#6c6c6c"><path d="M5 2 H9 L7 0 Z"/><path d="M5 12 H9 L7 14 Z"/><path d="M2 5 V9 L0 7 Z"/><path d="M12 5 V9 L14 7 Z"/></g></svg>
  <div class="bt" style="left:579px">适屏</div>
  <svg class="abs" style="left:624px;top:13px" width="14" height="12" viewBox="0 0 14 12"><rect x="3" y="2.6" width="8" height="6.8" fill="none" stroke="#6c6c6c" stroke-width="1.2"/><path d="M.5 3 V.5 H3 M11 .5 H13.5 V3 M13.5 9 V11.5 H11 M3 11.5 H.5 V9" fill="none" stroke="#6c6c6c"/></svg>
  <div class="bt" style="left:642px">原大</div>
  <div class="abs" style="left:692px;top:15px;width:9px;height:3px;background:#727272;border-radius:1px"></div>
  <div class="strack" style="left:713px;top:13px;width:148px"><i style="width:48px"></i></div>
  <svg class="abs" style="left:755.5px;top:10.4px" width="11" height="14" viewBox="0 0 11 14"><path d="M2.2 0.5 H8.8 Q10.5 0.5 10.5 2.2 V8.2 Q10.5 11.2 5.5 13.5 Q0.5 11.2 0.5 8.2 V2.2 Q0.5 0.5 2.2 0.5 Z" fill="url(#gth)" stroke="#4a4a4a" stroke-width="1"/><path d="M5.5 1.2 V7" stroke="#fff" stroke-opacity=".45" stroke-width="1"/></svg>
  <div class="abs" style="left:873.5px;top:15.5px;width:9px;height:2.6px;background:#727272"></div>
  <div class="abs" style="left:876.7px;top:12.3px;width:2.6px;height:9px;background:#727272"></div>
  <div class="bsep" style="left:907px"></div>
  <div class="abs" style="left:924px;top:15px;width:0;height:0;border:6px solid transparent;border-top:6px solid #b4b4b4;border-bottom:0"></div>
  <div class="bt" style="left:941px">展开<span class="mono">(0)</span></div>
  <div class="bsep" style="left:1003px"></div>
  <svg class="abs" style="left:1022px;top:24px" width="11" height="11" viewBox="0 0 11 11"><g fill="#4c4c4c"><rect x="8" y="0" width="2" height="2"/><rect x="4" y="4" width="2" height="2"/><rect x="8" y="4" width="2" height="2"/><rect x="0" y="8" width="2" height="2"/><rect x="4" y="8" width="2" height="2"/><rect x="8" y="8" width="2" height="2"/></g></svg>
</div>

</div></div>
</body>
</html>
